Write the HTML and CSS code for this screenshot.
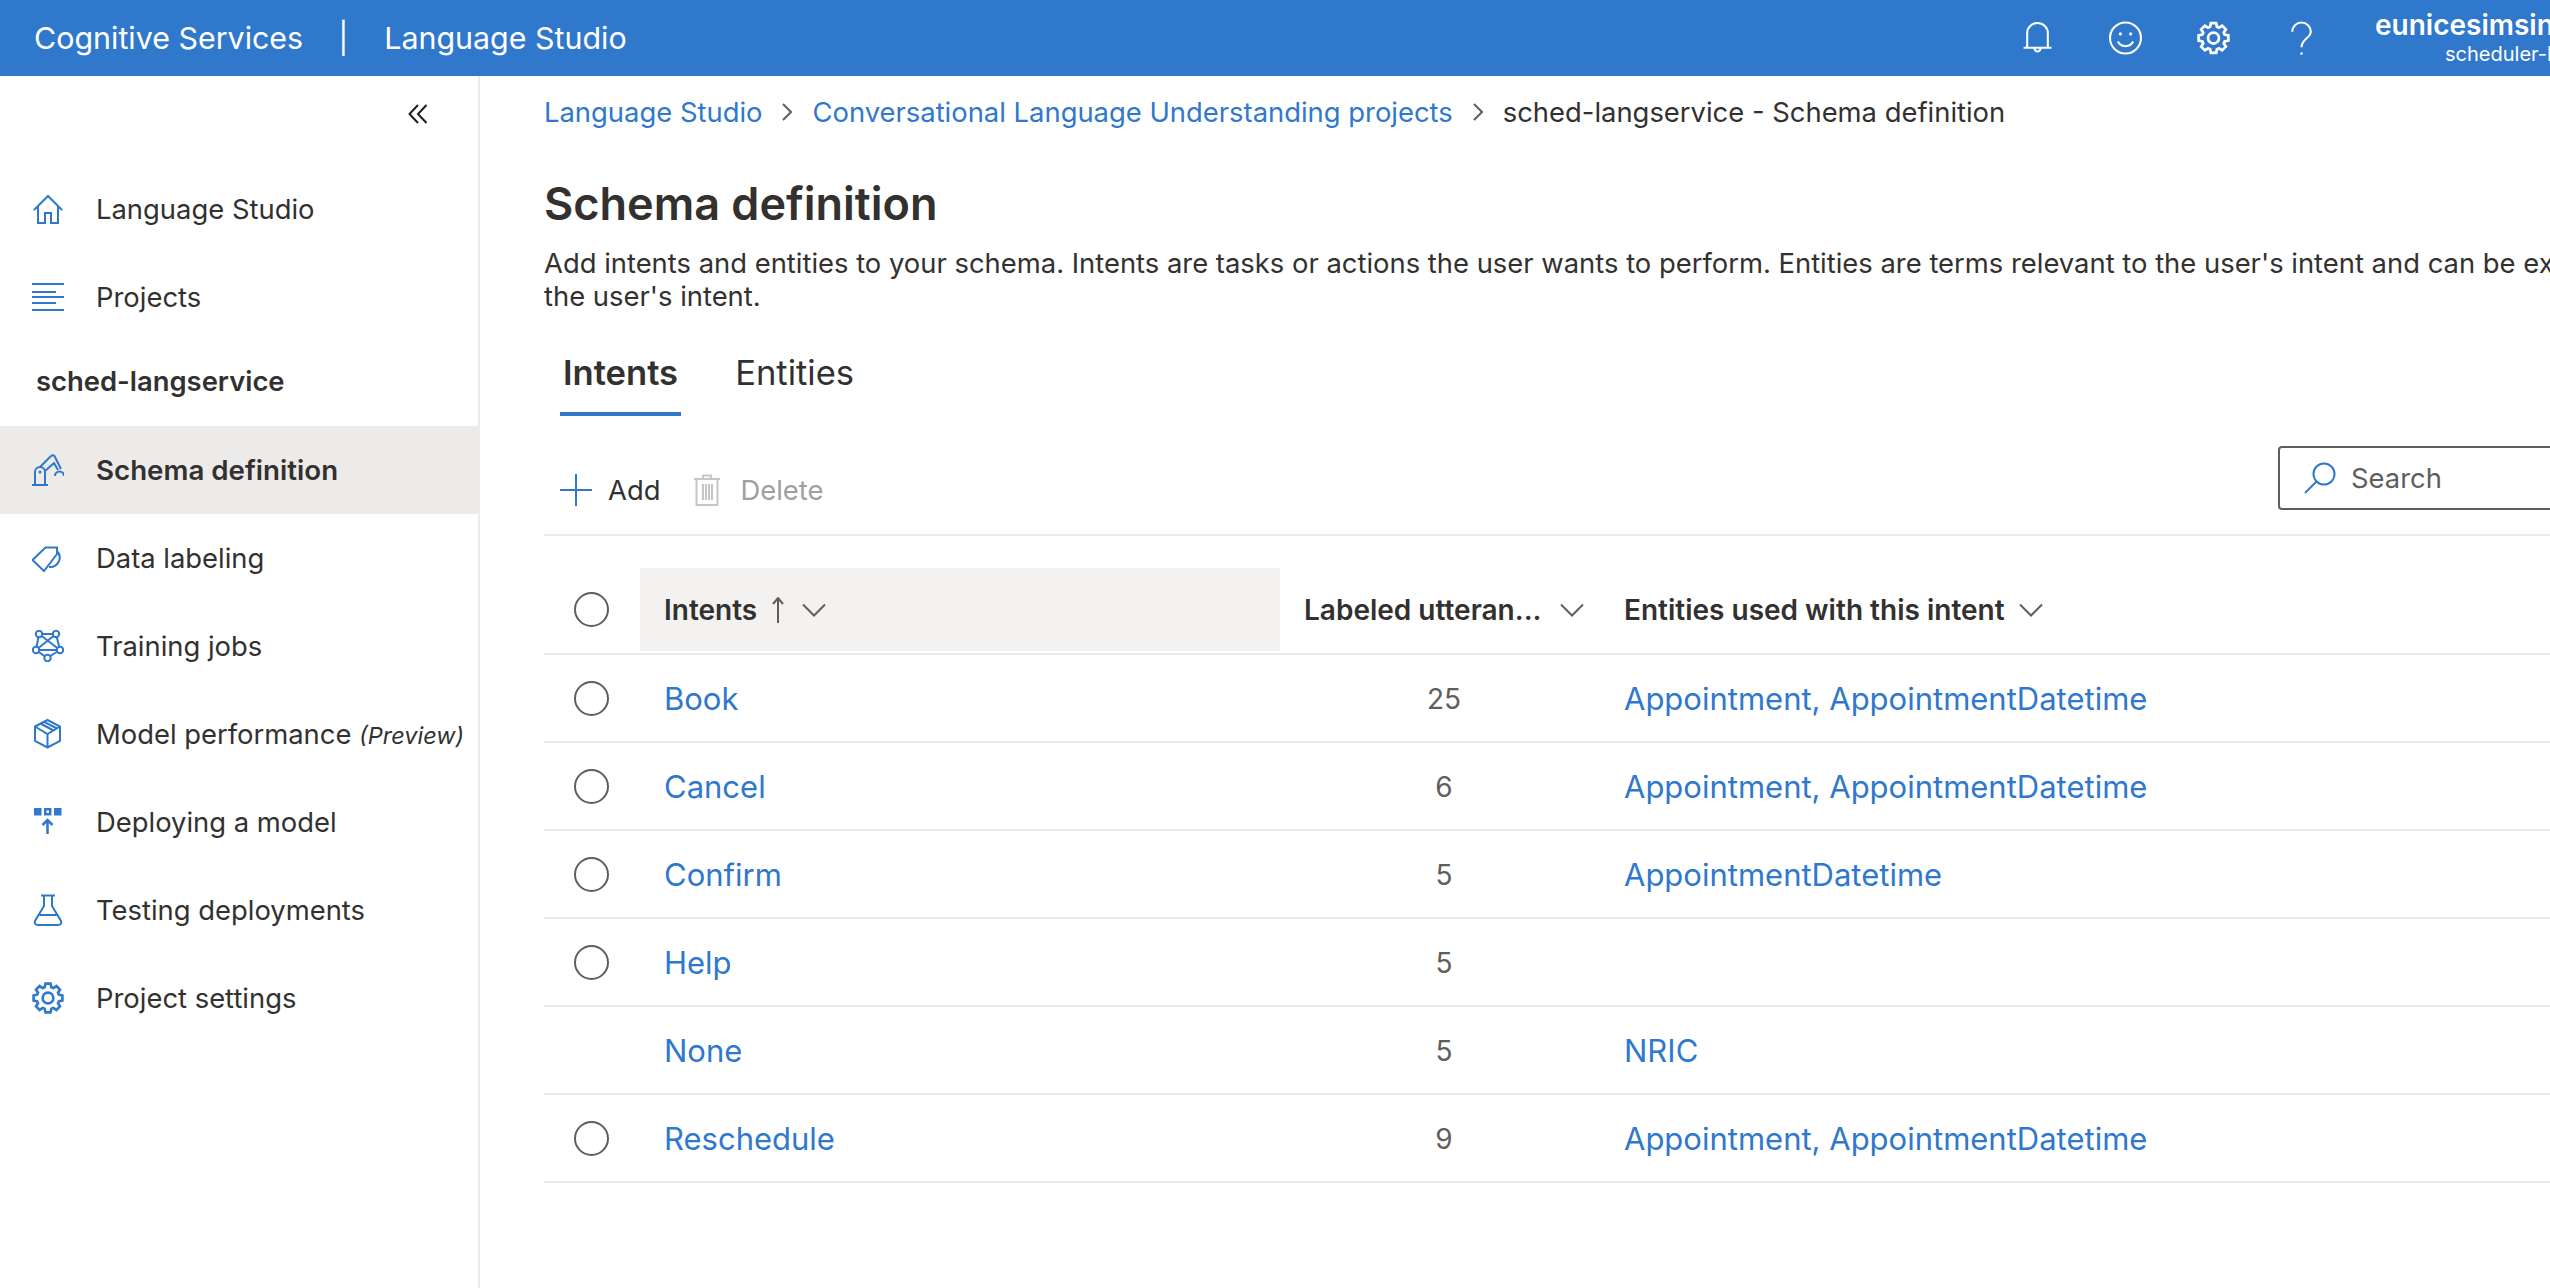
FILE: index.html
```html
<!DOCTYPE html>
<html lang="en">
<head>
    <meta charset="UTF-8">
    <title>Schema definition - Language Studio</title>
    <link rel="stylesheet" href="styles.css">
</head>
<body>
    <svg class="defs" width="0" height="0">
        <symbol id="gear" viewBox="0 0 24 24">
            <polygon points="9.5,3.9 10.1,1.2 13.9,1.2 14.5,3.9 15.96,4.51 18.29,3.02 20.98,5.71 19.49,8.04 20.1,9.5 22.8,10.1 22.8,13.9 20.1,14.5 19.49,15.96 20.98,18.29 18.29,20.98 15.96,19.49 14.5,20.1 13.9,22.8 10.1,22.8 9.5,20.1 8.04,19.49 5.71,20.98 3.02,18.29 4.51,15.96 3.9,14.5 1.2,13.9 1.2,10.1 3.9,9.5 4.51,8.04 3.02,5.71 5.71,3.02 8.04,4.51"/>
            <circle cx="12" cy="12" r="4"/>
        </symbol>
        <symbol id="chevron" viewBox="0 0 24 14">
            <path d="M1 1.5 L12 12.5 L23 1.5"/>
        </symbol>
    </svg>

    <header class="topbar">
        <div class="brand">
            <span>Cognitive Services</span>
            <span class="brand-sep">|</span>
            <span>Language Studio</span>
        </div>
        <div class="top-icons">
            <svg class="top-icon" viewBox="0 0 32 32"><path d="M6 25 V11 a10 9.500 0 0 1 20 0 V25 M2.500 25.500 H29.500 M13 26 a3 3 0 0 0 6 0"/></svg>
            <svg class="top-icon" viewBox="0 0 32 32"><circle cx="16" cy="16" r="15"/><path d="M8.500 19.500 a8.500 8.500 0 0 0 15 0"/><circle class="dot" cx="11" cy="12" r="1.500"/><circle class="dot" cx="21" cy="12" r="1.500"/></svg>
            <svg class="top-icon"><use href="#gear"/></svg>
            <svg class="top-icon" viewBox="0 0 32 32"><path d="M7 10 a9 9 0 0 1 18 0 c0 6 -9 7 -9 15"/><circle class="dot" cx="16" cy="31" r="1.200"/></svg>
        </div>
        <div class="user">
            <div class="user-name">eunicesimsin</div>
            <div class="user-sub">scheduler-langservice</div>
        </div>
    </header>

    <div class="layout">
        <aside class="sidebar">
            <div class="collapse">
                <svg viewBox="0 0 20 20"><path d="M10 1 L1.500 10 L10 19 M18.500 1 L10 10 L18.500 19"/></svg>
            </div>
            <nav class="nav">
                <a class="nav-item">
                    <svg class="nav-icon" viewBox="0 0 32 32"><path d="M2 17 L16 3 L30 17 M6 13.500 V30 H13 V20 H19 V30 H26 V13.500"/></svg>
                    <span>Language Studio</span>
                </a>
                <a class="nav-item">
                    <svg class="nav-icon" viewBox="0 0 32 32"><path d="M0 3 H32 M0 11 H24 M0 16 H32 M0 22 H24 M0 29 H32"/></svg>
                    <span>Projects</span>
                </a>
                <div class="nav-title">sched-langservice</div>
                <a class="nav-item active">
                    <svg class="nav-icon" viewBox="0 0 32 32"><path d="M0 31 H16 M3 31 V18 a5 5 0 0 1 10 0 V31 M8 13 L19 2 Q21 0.500 22.500 2 L29 15 M13 17 L22 9 L26 16 M23 22 a4.500 4.500 0 0 1 9 0"/><circle class="fill" cx="8" cy="18" r="1.500"/></svg>
                    <span>Schema definition</span>
                </a>
                <a class="nav-item">
                    <svg class="nav-icon" viewBox="0 0 32 32"><path d="M0.500 18 L13.500 5.500 H25 V12 L12 29 Z M25 9 A9.500 9.500 0 0 1 17 25"/></svg>
                    <span>Data labeling</span>
                </a>
                <a class="nav-item">
                    <svg class="nav-icon" viewBox="0 0 32 32"><path d="M7 4 H24 M7 4 L4 20 M24 4 L28 20 M4 20 L15 28 M28 20 L15 28 M4 20 H28 M7 4 L28 20 M24 4 L4 20"/><circle class="node" cx="7" cy="4" r="3.200"/><circle class="node" cx="24" cy="4" r="3.200"/><circle class="node" cx="4" cy="20" r="3.200"/><circle class="node" cx="28" cy="20" r="3.200"/><circle class="node" cx="15.500" cy="28" r="3.200"/></svg>
                    <span>Training jobs</span>
                </a>
                <a class="nav-item">
                    <svg class="nav-icon" viewBox="0 0 32 32"><path d="M3 8.500 L15.500 2 L28 8.500 V23 L15.500 29.500 L3 23 Z M3 8.500 L15.500 16 L28 8.500 M15.500 16 V29.500 M8.500 5.500 L21.500 12.500 M12 3.800 L25 10.500"/></svg>
                    <span>Model performance <em class="preview">(Preview)</em></span>
                </a>
                <a class="nav-item">
                    <svg class="nav-icon" viewBox="0 0 32 32"><rect class="fill" x="2" y="2" width="7.500" height="7.500"/><rect class="thick" x="13.200" y="3.200" width="5" height="5"/><rect class="fill" x="22" y="2" width="7.500" height="7.500"/><path class="thick" d="M15.500 28 V14 M10.500 19 L15.500 14 L20.500 19"/></svg>
                    <span>Deploying a model</span>
                </a>
                <a class="nav-item">
                    <svg class="nav-icon" viewBox="0 0 32 32"><path d="M9 1.500 H23 M12 2 V12 L3 27 Q2 31 6 31 H26 Q30 31 29 27 L20 12 V2 M7.500 21 H24.500"/></svg>
                    <span>Testing deployments</span>
                </a>
                <a class="nav-item">
                    <svg class="nav-icon"><use href="#gear"/></svg>
                    <span>Project settings</span>
                </a>
            </nav>
        </aside>

        <main class="main">
            <div class="breadcrumb">
                <a class="link">Language Studio</a>
                <svg class="crumb-sep" viewBox="0 0 10 18"><path d="M1 1 L9 9 L1 17"/></svg>
                <a class="link">Conversational Language Understanding projects</a>
                <svg class="crumb-sep" viewBox="0 0 10 18"><path d="M1 1 L9 9 L1 17"/></svg>
                <span>sched-langservice - Schema definition</span>
            </div>

            <h1 class="title">Schema definition</h1>
            <p class="desc">Add intents and entities to your schema. Intents are tasks or actions the user wants to perform. Entities are terms relevant to the user's intent and can be extracted from<br>the user's intent.</p>

            <div class="tabs">
                <div class="tab active">Intents</div>
                <div class="tab">Entities</div>
            </div>

            <div class="toolbar">
                <button class="tool">
                    <svg class="tool-icon" viewBox="0 0 32 32"><path d="M16 0 V32 M0 16 H32"/></svg>
                    Add
                </button>
                <button class="tool disabled">
                    <svg class="tool-icon trash" viewBox="0 0 26 32"><path d="M0 5 H26 M9 5 V1.500 H17 V5 M2.500 5 V31 H23.500 V5 M9 10 V26 M12 10 V26 M15 10 V26 M18 10 V26"/></svg>
                    Delete
                </button>
                <div class="search">
                    <svg class="search-icon" viewBox="0 0 32 32"><circle cx="20" cy="12" r="10.500"/><path d="M12.500 19.500 L1 31"/></svg>
                    <span>Search</span>
                </div>
            </div>

            <div class="table">
                <div class="row head">
                    <div class="cell check"><span class="radio"></span></div>
                    <div class="cell sorted">Intents
                        <svg class="sort-arrow" viewBox="0 0 12 26"><path d="M6 26 V1 M1 7 L6 1 L11 7"/></svg>
                        <svg class="chev wide"><use href="#chevron"/></svg>
                    </div>
                    <div class="cell">Labeled utteran...
                        <svg class="chev wide"><use href="#chevron"/></svg>
                    </div>
                    <div class="cell">Entities used with this intent
                        <svg class="chev"><use href="#chevron"/></svg>
                    </div>
                </div>
                <div class="row">
                    <div class="cell check"><span class="radio"></span></div>
                    <div class="cell"><a class="link">Book</a></div>
                    <div class="cell num">25</div>
                    <div class="cell"><a class="link">Appointment, AppointmentDatetime</a></div>
                </div>
                <div class="row">
                    <div class="cell check"><span class="radio"></span></div>
                    <div class="cell"><a class="link">Cancel</a></div>
                    <div class="cell num">6</div>
                    <div class="cell"><a class="link">Appointment, AppointmentDatetime</a></div>
                </div>
                <div class="row">
                    <div class="cell check"><span class="radio"></span></div>
                    <div class="cell"><a class="link">Confirm</a></div>
                    <div class="cell num">5</div>
                    <div class="cell"><a class="link">AppointmentDatetime</a></div>
                </div>
                <div class="row">
                    <div class="cell check"><span class="radio"></span></div>
                    <div class="cell"><a class="link">Help</a></div>
                    <div class="cell num">5</div>
                    <div class="cell"></div>
                </div>
                <div class="row">
                    <div class="cell check"></div>
                    <div class="cell"><a class="link">None</a></div>
                    <div class="cell num">5</div>
                    <div class="cell"><a class="link">NRIC</a></div>
                </div>
                <div class="row">
                    <div class="cell check"><span class="radio"></span></div>
                    <div class="cell"><a class="link">Reschedule</a></div>
                    <div class="cell num">9</div>
                    <div class="cell"><a class="link">Appointment, AppointmentDatetime</a></div>
                </div>
            </div>
        </main>
    </div>
</body>
</html>
```

FILE: styles.css
```css
* {
    margin: 0;
    padding: 0;
    box-sizing: border-box;
}

body {
    font-family: 'Inter', 'Liberation Sans', sans-serif;
    font-size: 27.4px;
    color: #323130;
    background: #fff;
    height: 100vh;
    overflow: hidden;
    display: flex;
    flex-direction: column;
}

svg {
    fill: none;
    stroke: currentColor;
    stroke-width: 2;
    flex: none;
}

.defs {
    position: absolute;
}

.link {
    color: #2f78cc;
}

/* top bar */
.topbar {
    height: 76px;
    flex: none;
    background: #2f78cc;
    color: #fff;
    display: flex;
    align-items: center;
    overflow: hidden;
}

.brand {
    display: flex;
    font-size: 30.4px;
    padding-left: 34px;
    flex: 1;
}

.brand-sep {
    margin: 0 36px 0 35px;
}

.top-icons {
    display: flex;
    gap: 55px;
}

.top-icon {
    width: 33px;
    height: 36px;
}

.top-icon .dot {
    fill: #fff;
    stroke: none;
}

.user {
    width: 175px;
    margin-left: 57px;
    flex: none;
    white-space: nowrap;
}

.user-name {
    font-size: 28px;
    font-weight: 600;
    line-height: 33px;
}

.user-sub {
    font-size: 20px;
    line-height: 25px;
    padding-left: 70px;
}

/* sidebar */
.layout {
    flex: 1;
    display: flex;
    min-height: 0;
}

.sidebar {
    width: 480px;
    flex: none;
    border-right: 2px solid #edebe9;
}

.collapse {
    height: 89px;
    padding: 28px 0 0 408px;
    color: #201f1e;
}

.collapse svg {
    width: 20px;
    height: 20px;
    display: block;
}

.nav {
    display: flex;
    flex-direction: column;
}

.nav-item {
    height: 88px;
    display: flex;
    align-items: center;
    gap: 32px;
    padding-left: 32px;
    white-space: nowrap;
}

.nav-item.active {
    background: #edebe9;
    font-size: 27.7px;
    font-weight: 600;
}

.nav-icon {
    width: 32px;
    height: 32px;
    color: #2f78cc;
}

.nav-icon .fill {
    fill: currentColor;
    stroke: none;
}

.nav-icon .thick {
    stroke-width: 2.5;
}

.nav-icon .node {
    fill: #fff;
}

.preview {
    font-size: 23.5px;
}

.nav-title {
    height: 85px;
    padding: 23px 0 0 36px;
    font-weight: 600;
}

/* main */
.main {
    flex: 1;
    min-width: 0;
    padding-left: 64px;
    overflow: hidden;
}

.breadcrumb {
    height: 72px;
    display: flex;
    align-items: center;
    gap: 20px;
    white-space: nowrap;
}

.crumb-sep {
    width: 10px;
    height: 18px;
    color: #605e5c;
}

.title {
    font-size: 45px;
    font-weight: 600;
    line-height: 56px;
    margin-top: 28px;
}

.desc {
    line-height: 33px;
    margin-top: 15px;
    white-space: nowrap;
}

.tabs {
    display: flex;
    margin-top: 24px;
    padding-left: 16px;
    gap: 51px;
}

.tab {
    font-size: 34.6px;
    line-height: 44px;
    padding: 13px 3px 18px;
}

.tab.active {
    font-weight: 600;
    border-bottom: 4px solid #2f78cc;
}

.toolbar {
    height: 120px;
    padding: 30px 0 0 16px;
    display: flex;
    align-items: flex-start;
    gap: 34px;
    border-bottom: 2px solid #edebe9;
}

.tool {
    height: 40px;
    margin-top: 24px;
    display: flex;
    align-items: center;
    gap: 16px;
    background: none;
    border: none;
    font: inherit;
    color: inherit;
}

.tool-icon {
    width: 32px;
    height: 32px;
    color: #2f78cc;
}

.tool-icon.trash {
    width: 26px;
    color: #c8c6c4;
}

.tool.disabled {
    color: #a19f9d;
    gap: 20px;
}

.search {
    margin-left: auto;
    margin-right: -60px;
    width: 332px;
    height: 64px;
    display: flex;
    align-items: center;
    gap: 15px;
    padding-left: 24px;
    border: 2px solid #605e5c;
    border-radius: 4px;
    color: #605e5c;
}

.search-icon {
    width: 32px;
    height: 32px;
    color: #2f78cc;
}

/* table */
.table {
    margin-top: 32px;
}

.row {
    display: grid;
    grid-template-columns: 96px 640px 320px 1fr;
    height: 88px;
    border-bottom: 2px solid #edebe9;
    font-size: 31px;
}

.row.head {
    font-size: 28px;
    font-weight: 600;
    height: 87px;
    padding-bottom: 2px;
}

.cell {
    display: flex;
    align-items: center;
    padding-left: 24px;
    white-space: nowrap;
}

.cell.check {
    padding-left: 30px;
}

.cell.sorted {
    background: #f3f2f1;
}

.cell.num {
    font-size: 28px;
    color: #605e5c;
    justify-content: center;
    padding: 2px 16px 0 24px;
}

.radio {
    width: 35px;
    height: 35px;
    border: 2px solid #605e5c;
    border-radius: 50%;
}

.sort-arrow {
    width: 12px;
    height: 26px;
    margin-left: 15px;
    color: #605e5c;
}

.chev {
    width: 24px;
    height: 14px;
    margin-left: 14px;
    color: #605e5c;
}

.chev.wide {
    margin-left: 18px;
}
```
